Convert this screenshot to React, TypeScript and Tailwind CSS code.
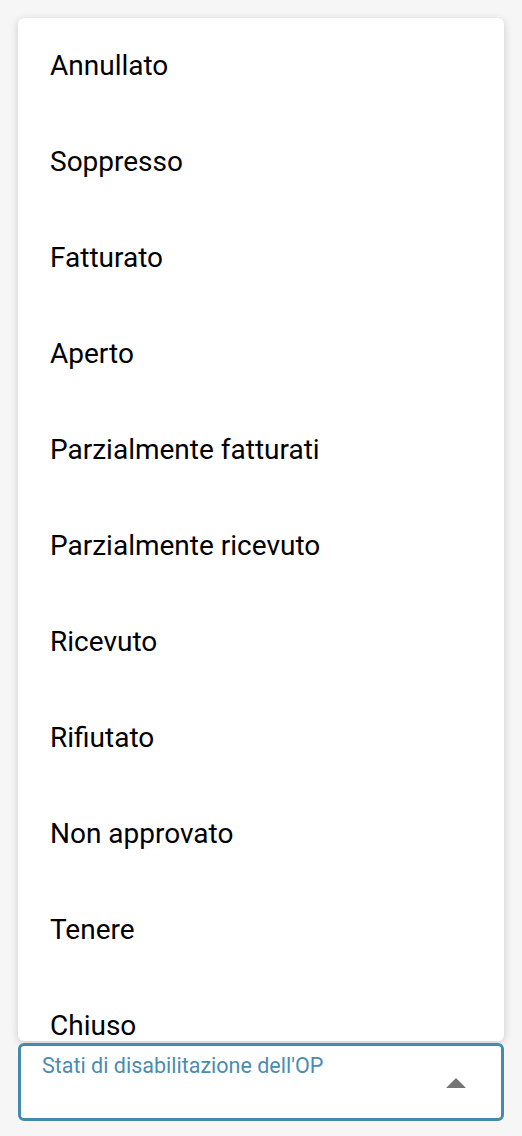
import React from "react";

const items = [
  "Annullato",
  "Soppresso",
  "Fatturato",
  "Aperto",
  "Parzialmente fatturati",
  "Parzialmente ricevuto",
  "Ricevuto",
  "Rifiutato",
  "Non approvato",
  "Tenere",
  "Chiuso",
];

export default function App() {
  return (
    <div
      className="w-[522px] h-[1136px] bg-[#f6f6f6] px-[18px] pt-[18px]"
      style={{ fontFamily: "Roboto, 'Liberation Sans', sans-serif" }}
    >
      <div className="h-[1023px] overflow-hidden rounded-[6px] bg-white shadow-[0_2px_8px_rgba(0,0,0,0.18)]">
        {items.map((t) => (
          <div
            key={t}
            className="flex h-[96px] items-center pl-[32px] text-[28px] leading-none text-black"
          >
            {t}
          </div>
        ))}
      </div>
      <div className="mt-[2px] flex h-[78px] rounded-[6px] border-[3px] border-[#4589ad] bg-white pl-[21px] pr-[35px]">
        <div className="flex-1 pt-[8px] text-[21.5px] leading-[24px] text-[#4a8cb0]">
          Stati di disabilitazione dell'OP
        </div>
        <div className="flex items-center pt-[2px]">
          <svg width="20" height="10" viewBox="0 0 20 10">
            <path d="M0 10 L10 0 L20 10 Z" fill="#757575" />
          </svg>
        </div>
      </div>
    </div>
  );
}
